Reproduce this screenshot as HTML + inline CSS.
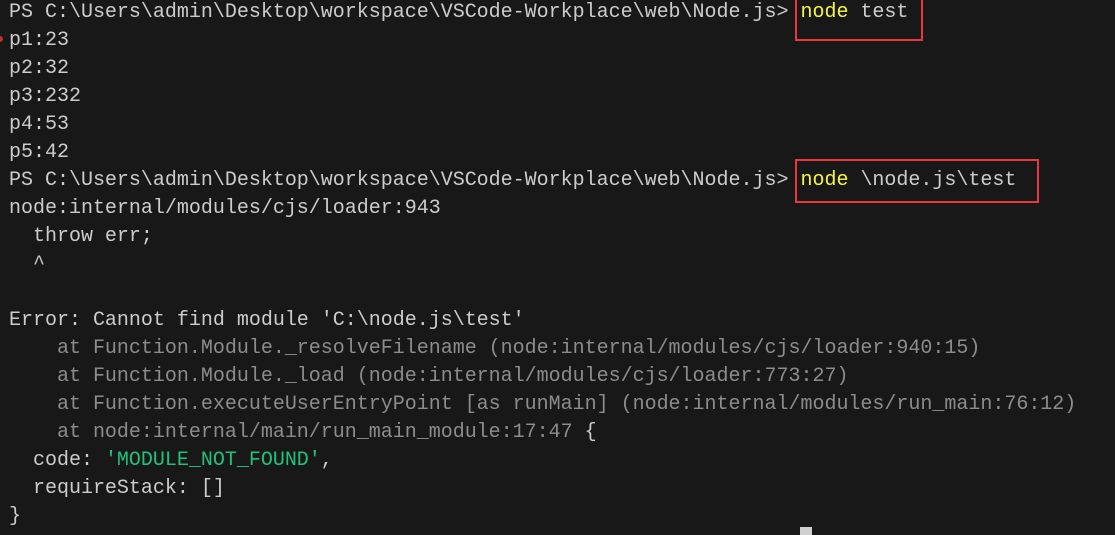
<!DOCTYPE html>
<html><head><meta charset="utf-8"><style>
html,body{margin:0;padding:0;width:1115px;height:535px;overflow:hidden;background:#181818;}
pre{margin:0;position:absolute;left:9px;top:-1px;font-family:"Liberation Mono",monospace;font-size:20px;letter-spacing:-0.01px;line-height:28px;color:#cccccc;white-space:pre;}
.y{color:#f5f543}.g{color:#8c8c8c}.gr{color:#23c07a}
.box{position:absolute;border:2px solid #e8383d;box-sizing:border-box}
.cur{position:absolute;left:800px;top:527px;width:12px;height:8px;background:#d0d0d0}
.dot{position:absolute;left:-3px;top:36px;width:6px;height:6px;border-radius:50%;background:#c03030}
</style></head><body>
<pre>PS C:\Users\admin\Desktop\workspace\VSCode-Workplace\web\Node.js&gt; <span class="y">node</span> test
p1:23
p2:32
p3:232
p4:53
p5:42
PS C:\Users\admin\Desktop\workspace\VSCode-Workplace\web\Node.js&gt; <span class="y">node</span> \node.js\test
node:internal/modules/cjs/loader:943
  throw err;
  ^

Error: Cannot find module 'C:\node.js\test'
<span class="g">    at Function.Module._resolveFilename (node:internal/modules/cjs/loader:940:15)
    at Function.Module._load (node:internal/modules/cjs/loader:773:27)
    at Function.executeUserEntryPoint [as runMain] (node:internal/modules/run_main:76:12)
    at node:internal/main/run_main_module:17:47</span> {
  code: <span class="gr">'MODULE_NOT_FOUND'</span>,
  requireStack: []
}</pre>
<div class="dot"></div>
<div class="box" style="left:795px;top:-2px;width:128px;height:43px"></div>
<div class="box" style="left:795px;top:159px;width:244px;height:44px"></div>
<div class="cur"></div>
</body></html>
